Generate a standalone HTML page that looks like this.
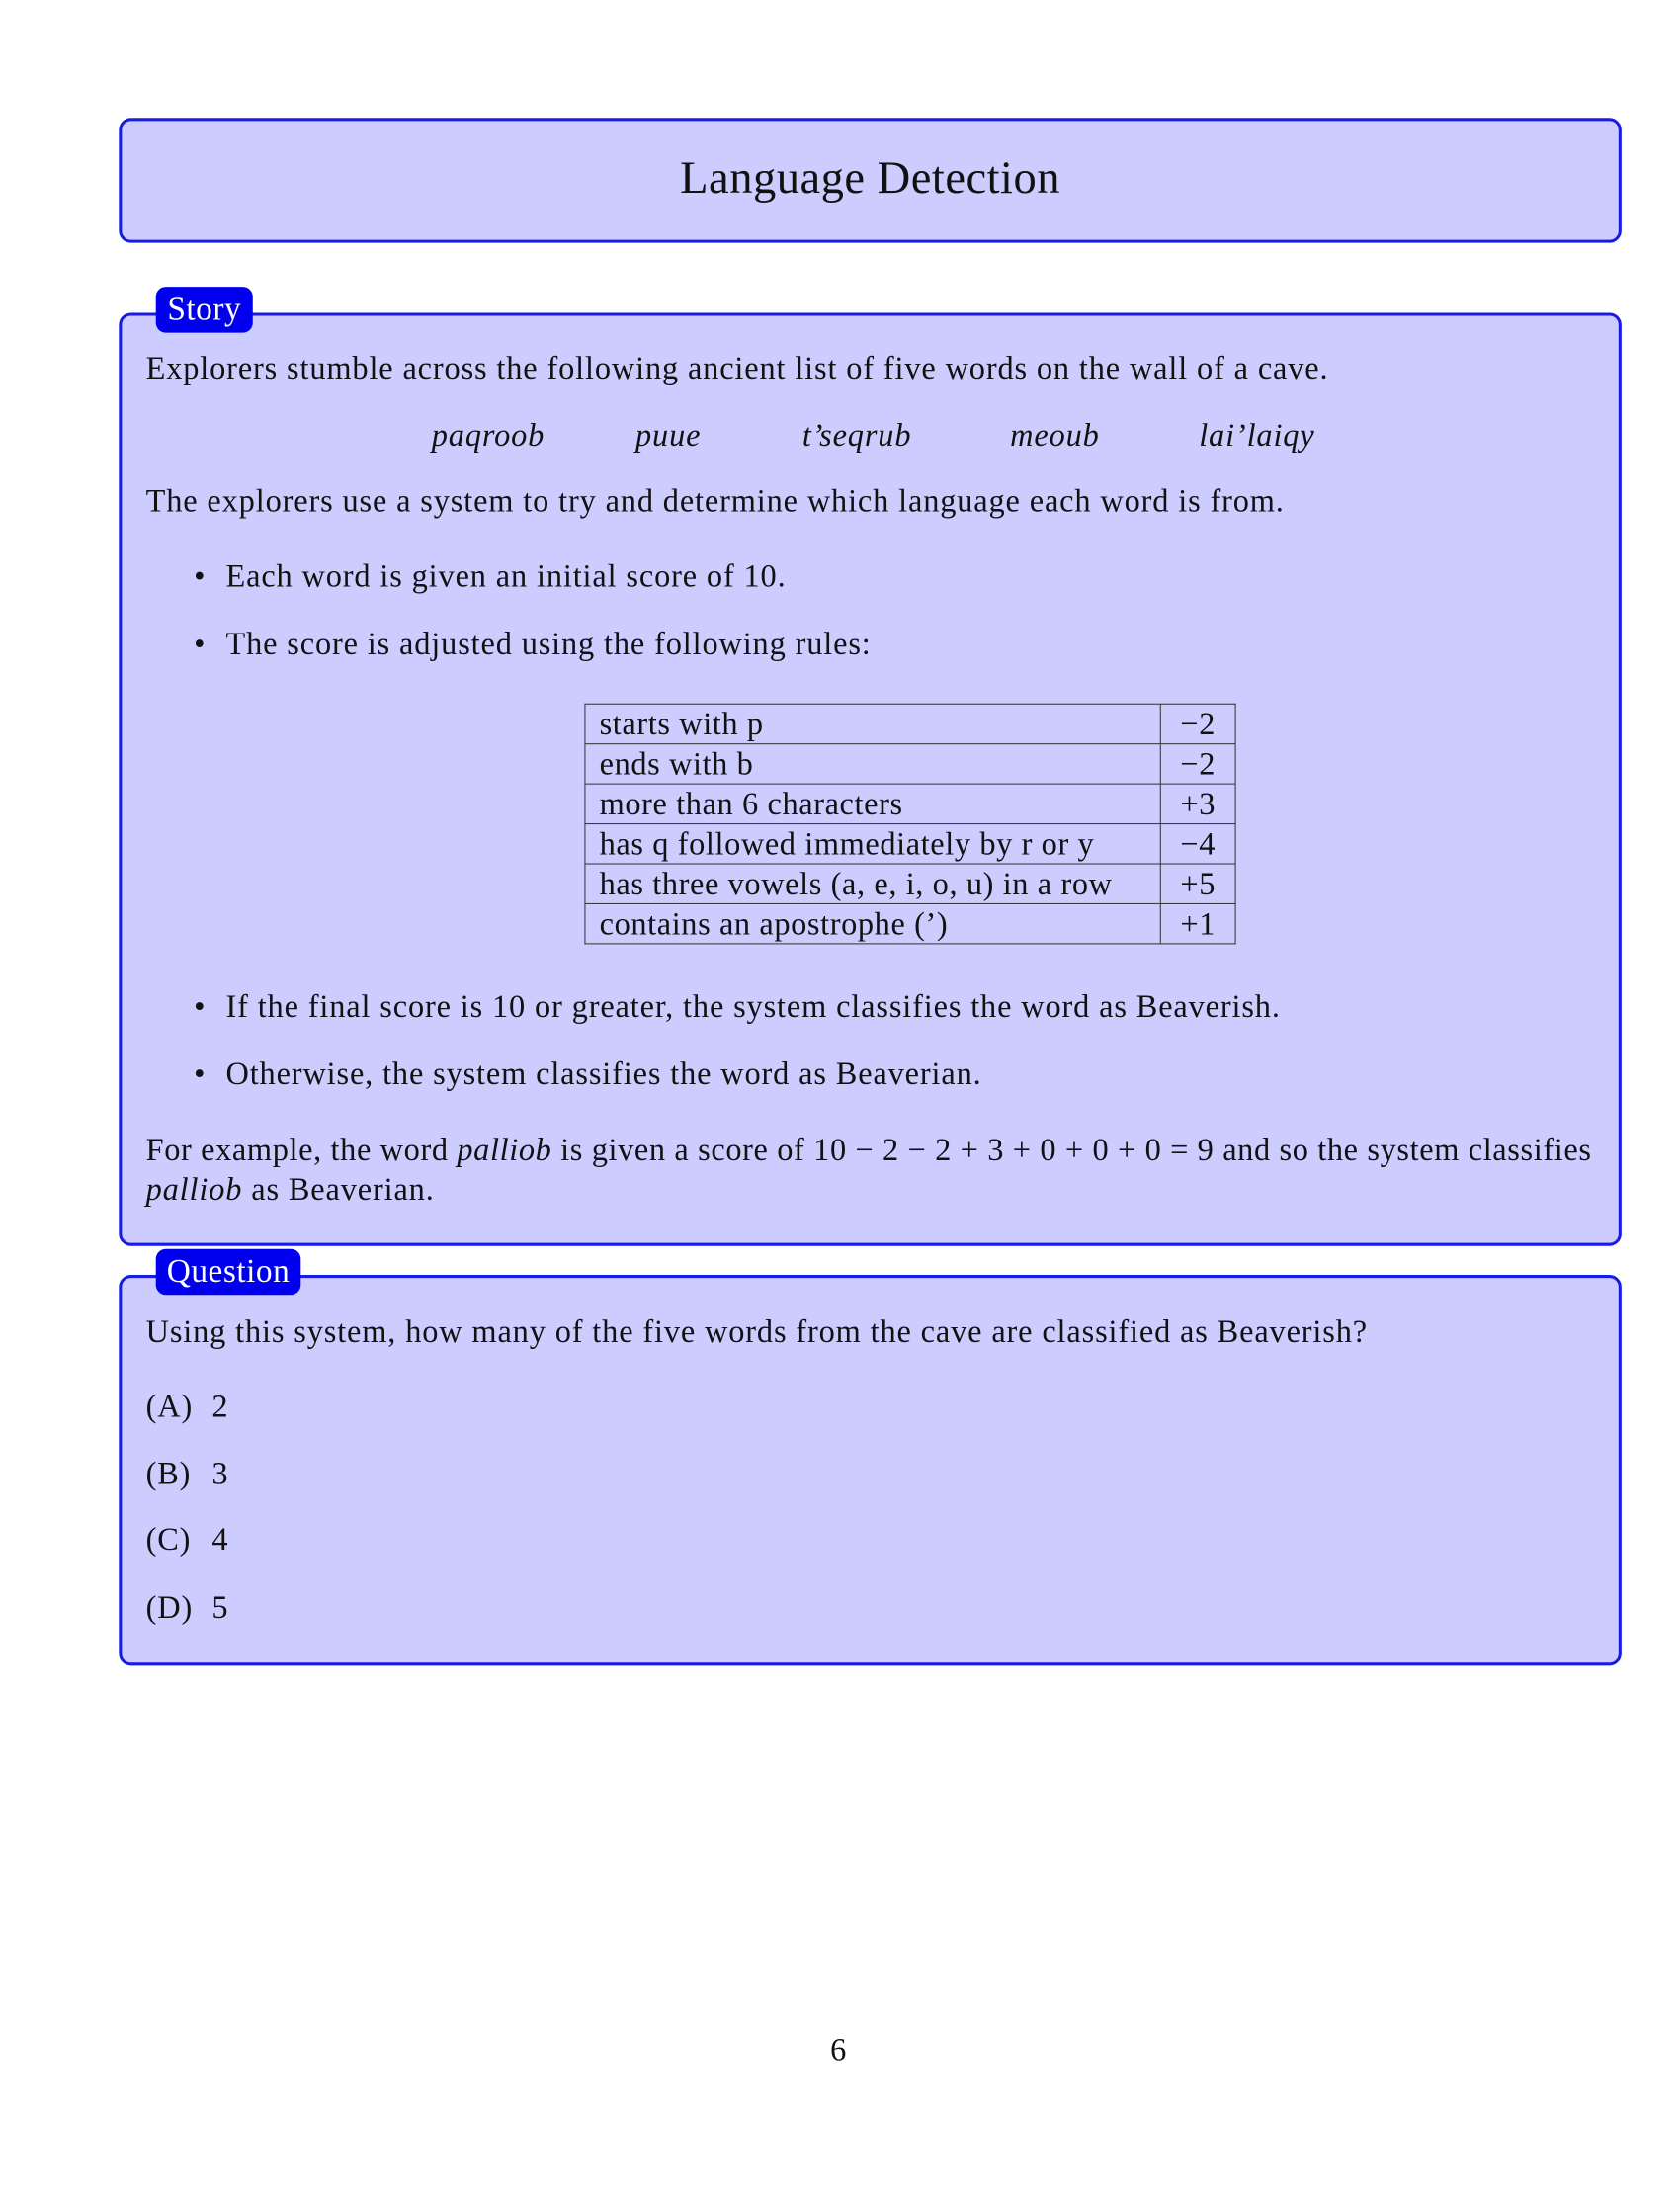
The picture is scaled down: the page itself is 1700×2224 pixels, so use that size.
<!DOCTYPE html>
<html><head><meta charset="utf-8"><style>
body{margin:0;width:1700px;height:2200px;background:#fff;position:relative;overflow:hidden;font-family:"Liberation Serif",serif;color:#111;font-size:32px;letter-spacing:0.85px}
#w{position:absolute;left:0;top:0;width:1700px;height:2200px;transform:scale(1.011);transform-origin:0 0}
.box{position:absolute;background:#ccccff;border:3px solid #1a1ae6;border-radius:12px;box-sizing:border-box}
.lab{position:absolute;background:#0000ee;color:#fff;border-radius:10px;font-size:33px;letter-spacing:0.5px;text-align:center;line-height:46px}
.t{position:absolute;height:40px;line-height:40px;white-space:nowrap}
i{font-style:italic}
table{position:absolute;left:585px;top:704px;border-collapse:collapse;width:652px}
td{border:1.5px solid #333;height:39px;padding:0 14px;font-size:32px;line-height:39px;letter-spacing:0.6px}
td.n{text-align:center;padding:0;width:74px}
</style></head><body><div id="w">
<div class="box" style="left:119px;top:118px;width:1504px;height:125px"></div>
<div class="t" style="left:119px;width:1504px;text-align:center;top:153px;height:50px;line-height:50px;font-size:46px;letter-spacing:0.5px">Language Detection</div>

<div class="box" style="left:119px;top:313px;width:1504px;height:934px"></div>
<div class="lab" style="left:156px;top:287px;width:97px">Story</div>
<div class="t" style="left:146px;top:348px">Explorers stumble across the following ancient list of five words on the wall of a cave.</div>
<div class="t" style="left:432px;top:415px"><i>paqroob</i></div>
<div class="t" style="left:636px;top:415px"><i>puue</i></div>
<div class="t" style="left:803px;top:415px"><i>t’seqrub</i></div>
<div class="t" style="left:1011px;top:415px"><i>meoub</i></div>
<div class="t" style="left:1200px;top:415px"><i>lai’laiqy</i></div>
<div class="t" style="left:146px;top:481px">The explorers use a system to try and determine which language each word is from.</div>
<div class="t" style="left:194px;top:556px">•</div><div class="t" style="left:226px;top:556px">Each word is given an initial score of 10.</div>
<div class="t" style="left:194px;top:624px">•</div><div class="t" style="left:226px;top:624px">The score is adjusted using the following rules:</div>
<table>
<tr><td>starts with p</td><td class="n">−2</td></tr>
<tr><td>ends with b</td><td class="n">−2</td></tr>
<tr><td>more than 6 characters</td><td class="n">+3</td></tr>
<tr><td>has q followed immediately by r or y</td><td class="n">−4</td></tr>
<tr><td>has three vowels (a, e, i, o, u) in a row</td><td class="n">+5</td></tr>
<tr><td>contains an apostrophe (’)</td><td class="n">+1</td></tr>
</table>
<div class="t" style="left:194px;top:987px">•</div><div class="t" style="left:226px;top:987px">If the final score is 10 or greater, the system classifies the word as Beaverish.</div>
<div class="t" style="left:194px;top:1054px">•</div><div class="t" style="left:226px;top:1054px">Otherwise, the system classifies the word as Beaverian.</div>
<div class="t" style="left:146px;top:1130px;letter-spacing:0.62px">For example, the word <i>palliob</i> is given a score of 10 − 2 − 2 + 3 + 0 + 0 + 0 = 9 and so the system classifies</div>
<div class="t" style="left:146px;top:1170px"><i>palliob</i> as Beaverian.</div>

<div class="box" style="left:119px;top:1276px;width:1504px;height:391px"></div>
<div class="lab" style="left:156px;top:1250px;width:145px">Question</div>
<div class="t" style="left:146px;top:1312px">Using this system, how many of the five words from the cave are classified as Beaverish?</div>
<div class="t" style="left:146px;top:1387px">(A)</div><div class="t" style="left:212px;top:1387px">2</div>
<div class="t" style="left:146px;top:1454px">(B)</div><div class="t" style="left:212px;top:1454px">3</div>
<div class="t" style="left:146px;top:1520px">(C)</div><div class="t" style="left:212px;top:1520px">4</div>
<div class="t" style="left:146px;top:1588px">(D)</div><div class="t" style="left:212px;top:1588px">5</div>
<div class="t" style="left:831px;top:2031px">6</div>
</div></body></html>
